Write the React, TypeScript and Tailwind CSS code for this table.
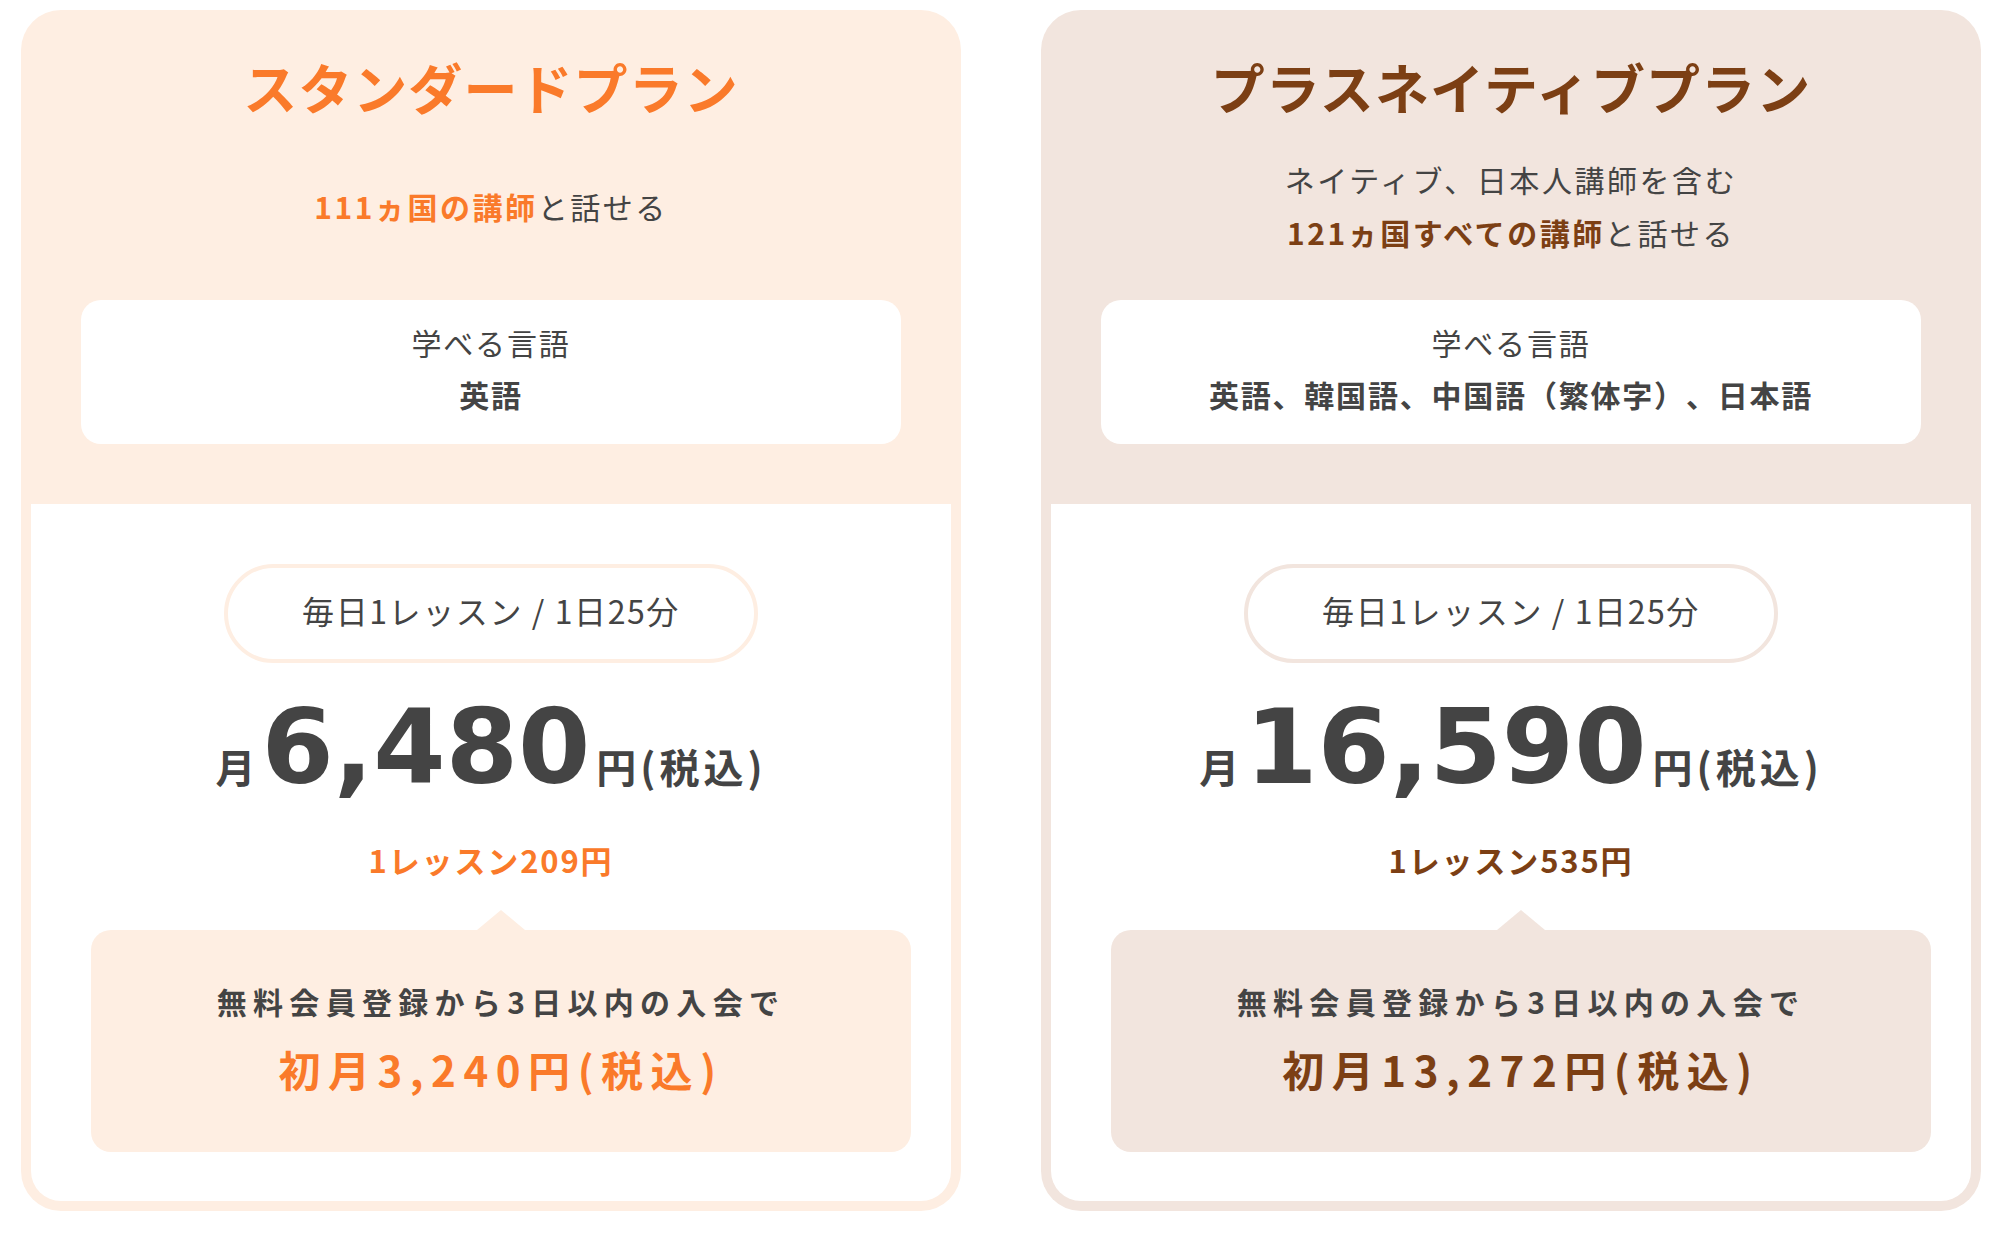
import React from 'react';

type Plan = {
  title: string;
  cardBg: string;
  accentText: string;
  pillBorder: string;
  triangle: string;
  subtitle: React.ReactNode;
  languages: string;
  price: string;
  perLesson: string;
  firstMonth: string;
};

const jp = { fontFamily: '"Noto Sans CJK JP", "Noto Sans", sans-serif' };
const num = { fontFamily: '"DejaVu Sans", "Noto Sans CJK JP", sans-serif' };

const plans: Plan[] = [
  {
    title: 'スタンダードプラン',
    cardBg: 'bg-[#feeee2]',
    accentText: 'text-[#fa7a2a]',
    pillBorder: 'border-[#feeee2]',
    triangle: 'border-b-[#feeee2]',
    subtitle: (
      <p>
        <span className="font-bold text-[#fa7a2a]">111ヵ国の講師</span>と話せる
      </p>
    ),
    languages: '英語',
    price: '6,480',
    perLesson: '1レッスン209円',
    firstMonth: '初月3,240円(税込)',
  },
  {
    title: 'プラスネイティブプラン',
    cardBg: 'bg-[#f2e5de]',
    accentText: 'text-[#7c3f14]',
    pillBorder: 'border-[#f2e5de]',
    triangle: 'border-b-[#f2e5de]',
    subtitle: (
      <>
        <p>ネイティブ、日本人講師を含む</p>
        <p>
          <span className="font-bold text-[#7c3f14]">121ヵ国すべての講師</span>と話せる
        </p>
      </>
    ),
    languages: '英語、韓国語、中国語（繁体字）、日本語',
    price: '16,590',
    perLesson: '1レッスン535円',
    firstMonth: '初月13,272円(税込)',
  },
];

function PlanCard({ plan }: { plan: Plan }) {
  return (
    <div className={`w-[940px] rounded-[40px] px-[10px] pb-[10px] ${plan.cardBg}`}>
      {/* header */}
      <div className="flex flex-col items-center pt-[37px] pb-[60px]">
        <h2 className={`text-[54px] leading-[80px] font-bold tracking-[0.02em] ${plan.accentText}`}>
          {plan.title}
        </h2>
        <div className="mt-[27px] flex h-[106px] flex-col items-center justify-center pb-[2px] text-[30px] leading-[53px] tracking-[0.085em] text-[#444]">
          {plan.subtitle}
        </div>
        <div className="mt-[40px] flex h-[144px] w-[820px] flex-col items-center justify-center rounded-[20px] bg-white pb-[8px] text-[30px] leading-[52px] tracking-[0.06em] text-[#444]">
          <p>学べる言語</p>
          <p className="font-bold">{plan.languages}</p>
        </div>
      </div>

      {/* body */}
      <div className="flex flex-col items-center rounded-b-[30px] bg-white pt-[60px] pb-[49px]">
        <div
          className={`flex h-[99px] w-[534px] items-center justify-center rounded-full border-4 bg-white pb-[7px] text-[32px] tracking-[0.05em] text-[#444] ${plan.pillBorder}`}
        >
          毎日1レッスン / 1日25分
        </div>

        <div className="mt-[32px] flex items-baseline text-[#444]">
          <span className="text-[40px] leading-none font-bold">月</span>
          <span style={num} className="mx-[6px] text-[104px] leading-none font-bold">
            {plan.price}
          </span>
          <span className="text-[40px] leading-none font-bold tracking-[0.1em]">円(税込)</span>
        </div>

        <p className={`mt-[37px] text-[31px] leading-[48px] font-bold tracking-[0.06em] ${plan.accentText}`}>
          {plan.perLesson}
        </p>

        <div className={`relative mt-[46px] ml-[20px] h-[222px] w-[820px] rounded-[20px] pt-[46px] text-center ${plan.cardBg}`}>
          <span
            className={`absolute -top-[20px] left-1/2 h-0 w-0 -translate-x-1/2 border-x-[24px] border-b-[20px] border-x-transparent ${plan.triangle}`}
          />
          <p className="text-[30px] leading-[50px] font-bold tracking-[0.21em] text-[#444]">
            無料会員登録から3日以内の入会で
          </p>
          <p className={`mt-[13px] text-[42px] leading-[60px] font-bold tracking-[0.18em] ${plan.accentText}`}>
            {plan.firstMonth}
          </p>
        </div>
      </div>
    </div>
  );
}

export default function App() {
  return (
    <div style={jp} className="min-h-screen bg-white pt-[10px] pl-[21px] [text-spacing-trim:space-all]">
      <div className="flex gap-[80px]">
        {plans.map((p) => (
          <PlanCard key={p.title} plan={p} />
        ))}
      </div>
    </div>
  );
}
